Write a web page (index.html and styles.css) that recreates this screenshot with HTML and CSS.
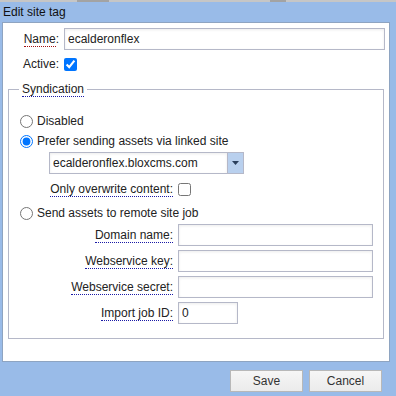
FILE: index.html
```html
<!DOCTYPE html>
<html>
<head>
<meta charset="utf-8">
<link rel="stylesheet" href="styles.css">
</head>
<body>
<div class="topstrip">
  <span class="seg s1"></span><span class="seg dark s2"></span><span class="seg s3"></span><span class="seg dark s4"></span><span class="seg s5"></span>
</div>
<div class="window">
  <div class="header">Edit site tag</div>
  <div class="panel">
    <div class="row">
      <label class="lbl"><span class="u req">Name</span>:</label>
      <input class="text name-input" type="text" value="ecalderonflex">
    </div>
    <div class="row active-row">
      <label class="lbl">Active:</label>
      <input class="chk" type="checkbox" checked>
    </div>
    <fieldset class="fs">
      <legend class="legend"><span class="u">Syndication</span></legend>
      <div class="radio-row"><input class="rad" type="radio" name="synd"><span>Disabled</span></div>
      <div class="radio-row"><input class="rad" type="radio" name="synd" checked><span>Prefer sending assets via linked site</span></div>
      <div class="combo">
        <div class="combo-text">ecalderonflex.bloxcms.com</div>
        <div class="combo-btn"><svg width="7" height="4" viewBox="0 0 7 4"><path d="M0 0H7L3.5 4Z" fill="#2b3f5c"/></svg></div>
      </div>
      <div class="sub-row overwrite">
        <label class="sublbl"><span class="u">Only overwrite content:</span></label>
        <input class="chk" type="checkbox">
      </div>
      <div class="radio-row send"><input class="rad" type="radio" name="synd"><span>Send assets to remote site job</span></div>
      <div class="sub-row first">
        <label class="sublbl"><span class="u">Domain name:</span></label>
        <input class="text sub-input" type="text">
      </div>
      <div class="sub-row">
        <label class="sublbl"><span class="u">Webservice key:</span></label>
        <input class="text sub-input" type="text">
      </div>
      <div class="sub-row">
        <label class="sublbl"><span class="u">Webservice secret:</span></label>
        <input class="text sub-input" type="text">
      </div>
      <div class="sub-row">
        <label class="sublbl"><span class="u">Import job ID:</span></label>
        <input class="text id-input" type="text" value="0">
      </div>
    </fieldset>
  </div>
  <div class="footer">
    <button class="btn">Save</button>
    <button class="btn">Cancel</button>
  </div>
</div>
</body>
</html>
```
FILE: styles.css
```css
html, body {
  margin: 0;
  padding: 0;
  background: #99bbe8;
  width: 396px;
  height: 396px;
  overflow: hidden;
  font-family: "Liberation Sans", Arial, sans-serif;
  font-size: 12px;
  color: #222;
}

.topstrip {
  height: 2px;
  display: flex;
  background: #c6c6c6;
}
.seg { height: 2px; background: #c6c6c6; }
.seg.dark { background: #a3a3a3; }
.s1 { width: 77px; }
.s2 { width: 32px; }
.s3 { width: 161px; }
.s4 { width: 16px; }
.s5 { flex: 1; }

.header {
  height: 20px;
  line-height: 20px;
  padding-left: 3px;
  color: #111;
}

.panel {
  box-sizing: border-box;
  width: 388px;
  margin-left: 2px;
  background: #fff;
  border: 1px solid #8ea4c1;
  padding: 5px 0 22px 0;
}

.row {
  display: flex;
  align-items: center;
  height: 22px;
}
.active-row {
  height: 20px;
  margin-top: 4px;
}
.lbl {
  width: 56px;
  text-align: right;
  margin-right: 5px;
  white-space: nowrap;
}
.u {
  border-bottom: 1px dotted #1a1aa6;
}
.u.req {
  border-bottom-color: #a01010;
}

.text {
  box-sizing: border-box;
  height: 22px;
  border: 1px solid #b5b8c8;
  background: #fff;
  box-shadow: inset 0 1px 3px rgba(0,0,0,0.08);
  padding: 0 3px;
  font-family: "Liberation Sans", Arial, sans-serif;
  font-size: 12px;
  color: #222;
  margin: 0;
  outline: none;
}
.name-input { width: 321px; }

.chk, .rad {
  width: 13px;
  height: 13px;
  margin: 0;
}

.fs {
  margin: 8px 5px 0 5px;
  padding: 15px 10px 14px 10px;
  border: 1px solid #b5b8c8;
  min-width: 0;
}
.legend {
  padding: 0 3px;
  line-height: 14px;
}

.radio-row {
  display: flex;
  align-items: center;
  height: 20px;
}
.radio-row .rad {
  margin-left: 1px;
  margin-right: 4px;
}
.radio-row.send { margin-top: 4px; }

.combo {
  display: flex;
  width: 195px;
  height: 22px;
  margin: 1px 0 0 30px;
}
.combo-text {
  box-sizing: border-box;
  flex: 1;
  height: 22px;
  line-height: 20px;
  border: 1px solid #b5b8c8;
  border-right: none;
  padding-left: 3px;
  box-shadow: inset 0 1px 3px rgba(0,0,0,0.08);
}
.combo-btn {
  box-sizing: border-box;
  width: 17px;
  height: 22px;
  background: #b9d0ee;
  border: 1px solid #b5b8c8;
  display: flex;
  align-items: center;
  justify-content: center;
}

.sub-row {
  display: flex;
  align-items: center;
  height: 22px;
  margin-top: 4px;
}
.sub-row.overwrite {
  height: 20px;
  margin-top: 5px;
}
.sub-row.first { margin-top: 1px; }
.sublbl {
  width: 154px;
  text-align: right;
  margin-right: 5px;
  white-space: nowrap;
}
.sub-input { width: 195px; }
.id-input { width: 60px; }

.footer {
  display: flex;
  justify-content: flex-end;
  gap: 6px;
  padding: 8px 14px 0 0;
}
.btn {
  box-sizing: border-box;
  width: 73px;
  height: 22px;
  margin: 0;
  padding: 0;
  border: 1px solid #b8b8b8;
  background: linear-gradient(#f6f6f6, #ebebeb);
  font-family: "Liberation Sans", Arial, sans-serif;
  font-size: 12px;
  color: #333;
}
```
